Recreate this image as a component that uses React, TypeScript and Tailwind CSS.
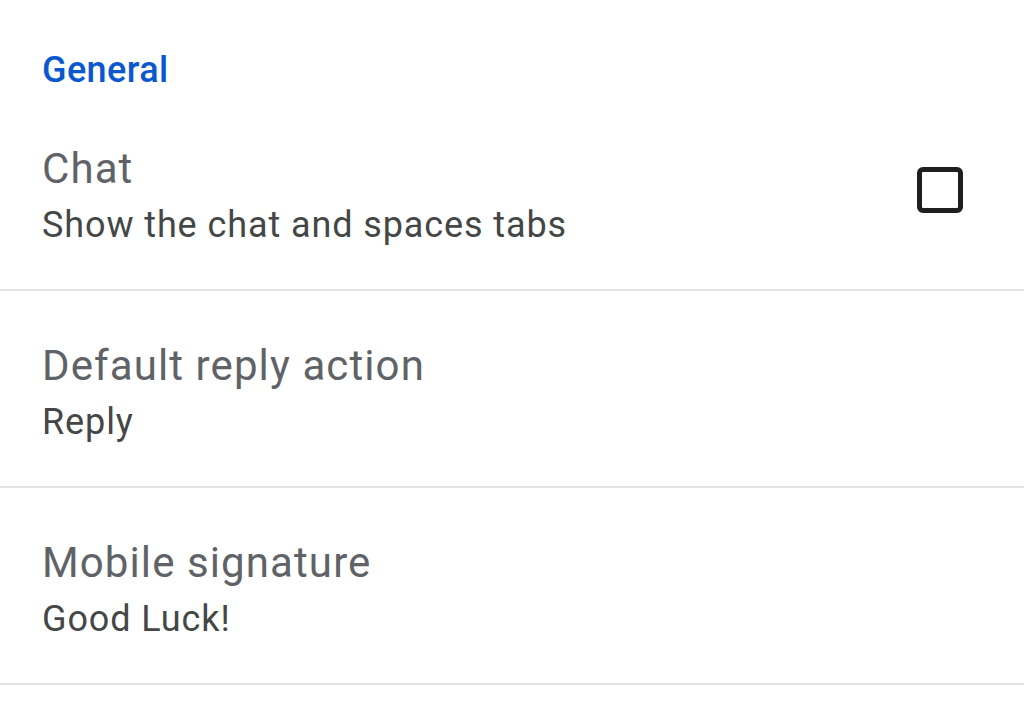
import React from "react";

function Row({ title, subtitle, checkbox }: { title: string; subtitle: string; checkbox?: boolean }) {
  return (
    <div className="flex items-center justify-between border-b-2 border-[#e3e3e3] pl-[42px] pr-[61px] h-[197px]">
      <div className="flex flex-col pt-[10px]">
        <div className="text-[42px] leading-[56px] tracking-[1.1px] text-[#5f6368]">{title}</div>
        <div className="text-[36px] leading-[56px] tracking-[0.9px] text-[#444746]">{subtitle}</div>
      </div>
      {checkbox && <div className="mb-[3px] w-[46px] h-[46px] rounded-[6px] border-[5px] border-[#1f1f1f]" />}
    </div>
  );
}

export default function App() {
  return (
    <div className="w-[1024px] h-[701px] bg-white overflow-hidden" style={{ fontFamily: "Roboto, 'Noto Sans', sans-serif" }}>
      <div className="pl-[42px] pt-[48px] h-[94px] text-[36px] leading-[44px] tracking-[0.4px] font-medium text-[#0b57d0]">General</div>
      <Row title="Chat" subtitle="Show the chat and spaces tabs" checkbox />
      <Row title="Default reply action" subtitle="Reply" />
      <Row title="Mobile signature" subtitle="Good Luck!" />
    </div>
  );
}
